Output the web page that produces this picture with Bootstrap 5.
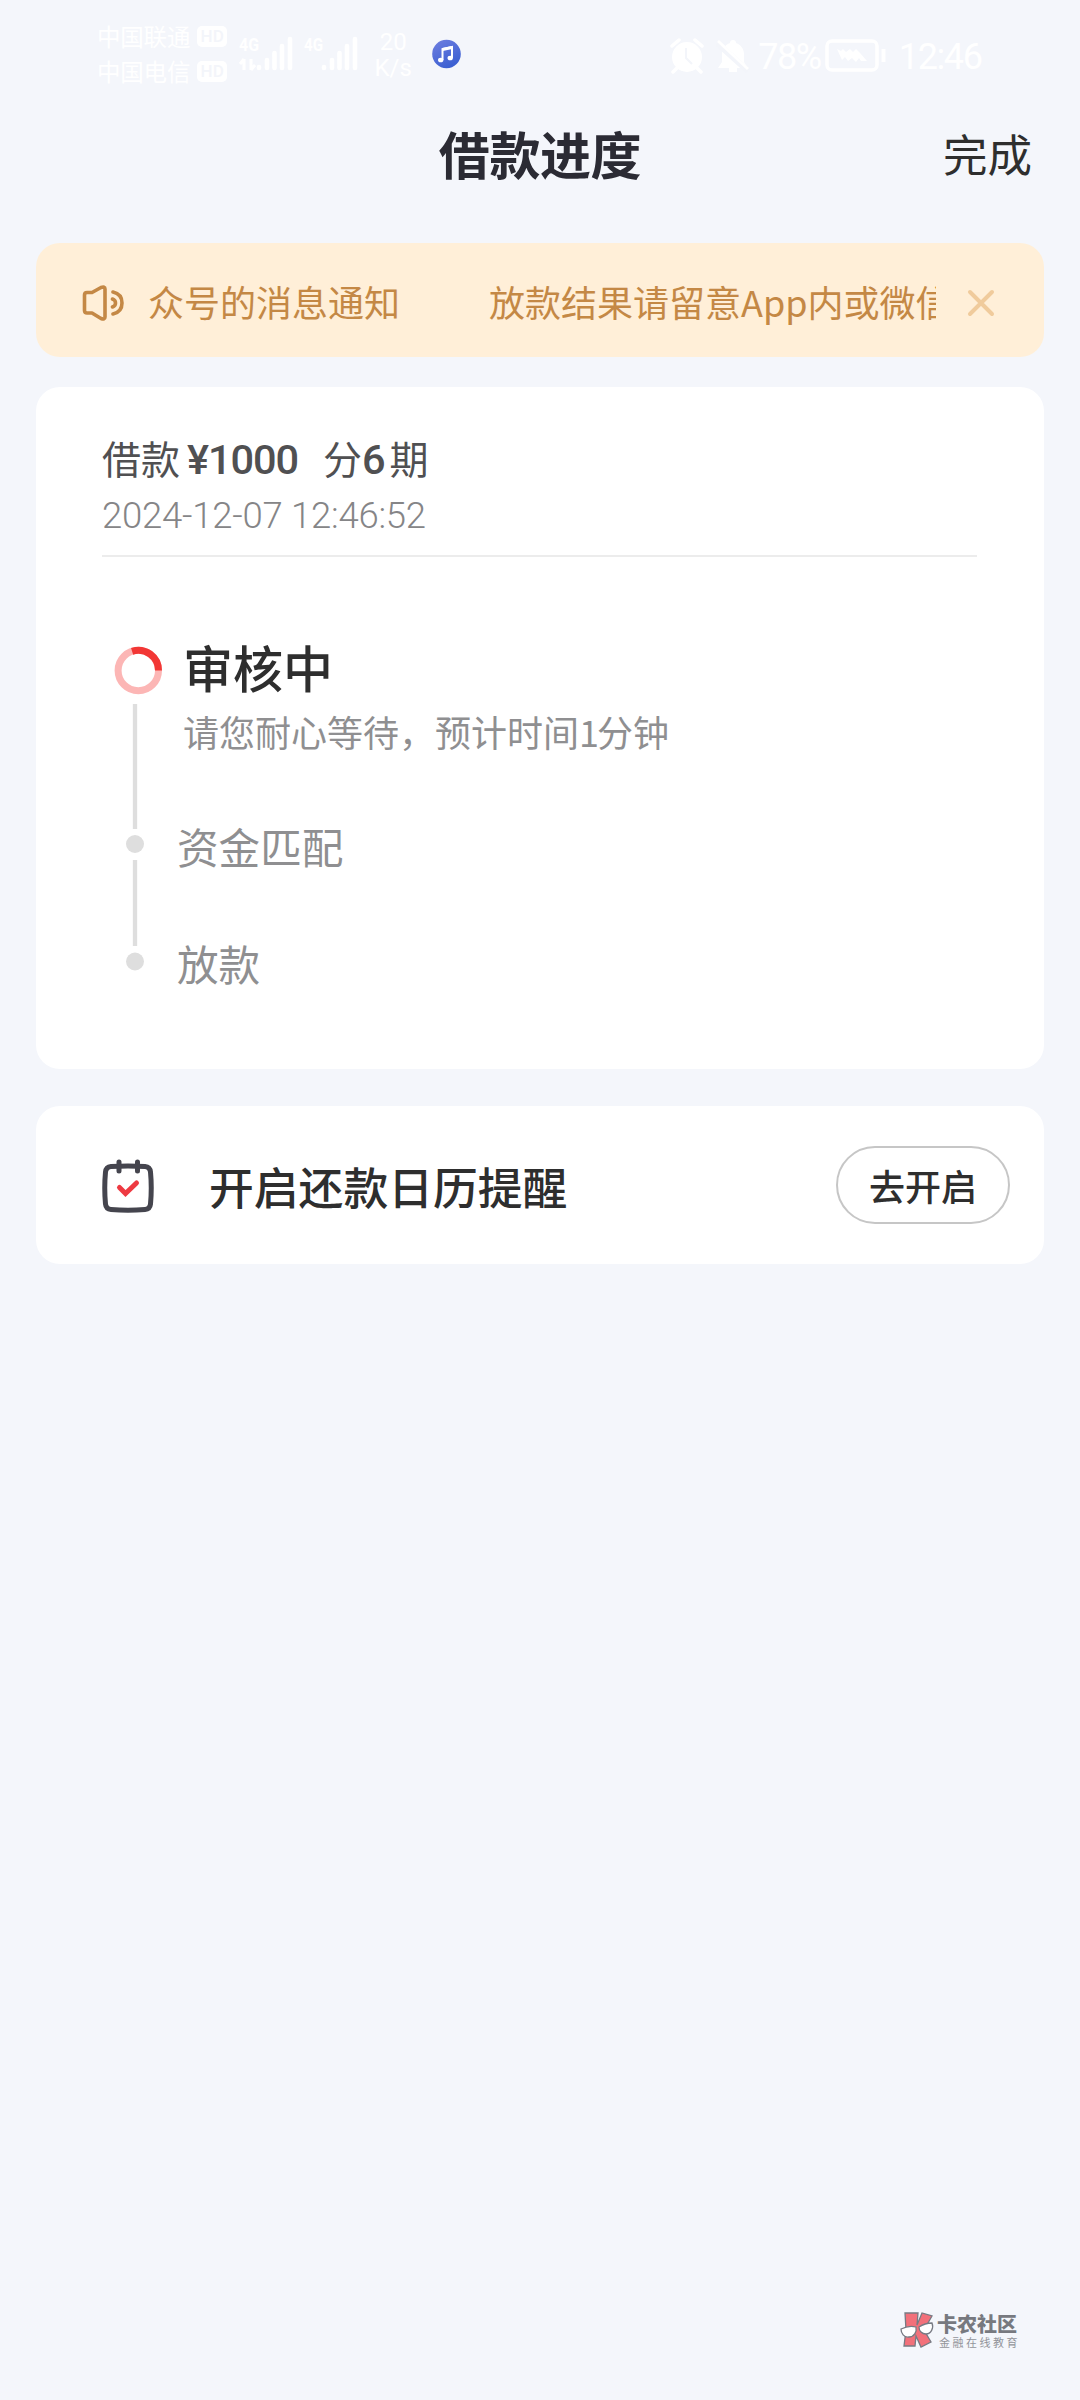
<!DOCTYPE html>
<html lang="zh-CN">
<head>
<meta charset="utf-8">
<meta name="viewport" content="width=device-width, initial-scale=1">
<title>借款进度</title>
<link href="https://cdn.jsdelivr.net/npm/bootstrap@5.3.0/dist/css/bootstrap.min.css" rel="stylesheet">
<style>
body{background:#f4f6fb;font-family:"Noto Sans CJK SC",sans-serif;color:#2e2e2e;width:1080px;min-height:2400px}
svg{display:block;flex:none}
.status-bar{height:110px;padding:19px 0 0 97px;color:#fff;line-height:1}
.carrier{font-size:23.5px;line-height:35px;height:35px;letter-spacing:-.2px}
.hd-tag{width:30px;height:21px;margin-left:7px;border-radius:5px;background:#fff;color:#f3f5fa;font:500 17px/21px Roboto,sans-serif;text-align:center;letter-spacing:0}
.signals{margin-left:8px}
.speed{width:44px;margin-top:10px;font:400 24px/26px Roboto,sans-serif;text-align:center}
.music{margin:19px 0 0 15px}
.system{margin:18px 0 0 208px}
.bell{margin-left:12px}
.battery{margin:0 12px 0 4px}
.clock{font-family:Roboto,sans-serif;font-size:36px;line-height:36px;padding-top:2px;letter-spacing:-1.4px}
.title-bar{height:133px}
.title-bar h1{font-size:51px;line-height:87px;color:#2b2b34;letter-spacing:-.4px}
.title-bar a{font-size:44.5px;line-height:85px;color:#2e2e2e;right:48px;top:0}
.panel{margin:0 36px;border-radius:24px;background:#fff}
.notice{height:114px;background:#ffefd8;color:#c48845;padding:0 49px 0 46px}
.notice svg{margin-top:5px}
.marquee{width:788px;margin-left:24px;font-size:36px;line-height:60px;padding-top:1px;white-space:nowrap;overflow:hidden}
.marquee .gap{display:inline-block;width:89px}
.loan{margin-top:30px;height:682px;padding:42px 67px 0 66px}
.amount{font-size:39px;line-height:56px;height:56px;color:#505052}
.din{font-family:Roboto,sans-serif;font-weight:500;font-size:41.5px;letter-spacing:-1.1px;padding-top:5px}
.stamp{font:300 36.5px/46px Roboto,sans-serif;letter-spacing:-.25px;color:#858587;margin-top:8px;border-bottom:2px solid #ececec;height:64px}
.rail{width:48px;margin-left:12px;margin-right:21px}
.steps{margin-top:87px}
.step-list{margin-top:-8px}
.step-now{font-size:50px;font-weight:500;line-height:60px;color:#2e2e2e}
.step-tip{font-size:36px;line-height:50px;color:#8f8f91;margin-top:10px}
.step-tip span{letter-spacing:-2px}
.step-next{font-size:41.6px;line-height:60px;color:#8f8f91;margin:60px 0 0 -6px}
.step-next + .step-next{margin-top:57px}
.remind{margin-top:37px;height:158px;padding:2px 34px 0 66px}
.remind-label{font-size:44.8px;font-weight:500;margin-left:55px;line-height:64px}
.btn-open{width:174px;height:78px;border:2px solid #c6c6c6;border-radius:39px;font-size:36px;font-weight:500;line-height:74px;padding:0;color:#2e2e2e;margin-top:-2px}
.brand{left:899px;top:2311px}
.brand-text{padding:2px 0 0 2px}
.brand-name{font-size:20px;line-height:22px;font-weight:900;color:#77797f}
.brand-sub{font-size:11px;line-height:14px;letter-spacing:2.5px;color:#92949a;padding-left:2px}
</style>
</head>
<body class="position-relative overflow-hidden">
<header class="status-bar d-flex align-items-start">
  <div>
    <div class="carrier d-flex align-items-center">中国联通<span class="hd-tag">HD</span></div>
    <div class="carrier d-flex align-items-center">中国电信<span class="hd-tag">HD</span></div>
  </div>
  <svg class="signals" width="136" height="60" viewBox="0 0 136 60" fill="#fff">
    <g font-family="Roboto,sans-serif" font-size="18" font-weight="700"><text x="4" y="32" textLength="20" lengthAdjust="spacingAndGlyphs">4G</text><text x="69" y="32" textLength="19" lengthAdjust="spacingAndGlyphs">4G</text></g>
    <path d="M9 40v11M9 40l-4 5M16 51V40M16 51l4-5" stroke="#fff" stroke-width="3"/>
    <g stroke="#fff" stroke-width="4.600" stroke-linecap="round"><path d="M24 48v1M32 41v8M39.500 34v15M47 27v22M55 20v29M89 48v1M97 41v8M104.500 34v15M112 27v22M120 20v29"/></g>
  </svg>
  <div class="speed">20<br>K/s</div>
  <svg class="music" width="32" height="32" viewBox="0 0 32 32">
    <defs><linearGradient id="mg" x1="0" y1="0" x2=".5" y2="1"><stop offset="0" stop-color="#707fe0"/><stop offset="1" stop-color="#3c60d2"/></linearGradient></defs>
    <circle cx="16.500" cy="16" r="14.300" fill="url(#mg)"/>
    <path d="M12.500 22V11l9.500-2v11" fill="none" stroke="#fff" stroke-width="2"/><path d="M12.500 11.500l9.500-2" stroke="#fff" stroke-width="3"/><ellipse cx="10.700" cy="22" rx="2.700" ry="2.300" fill="#fff"/><ellipse cx="20.200" cy="20" rx="2.700" ry="2.300" fill="#fff"/>
  </svg>
  <div class="system d-flex align-items-center">
    <svg width="34" height="36" viewBox="0 0 34 36"><circle cx="17" cy="19" r="15" fill="#fff"/><path d="M2 8l7-6M32 8l-7-6M7 30l-4 4M27 30l4 4" stroke="#fff" stroke-width="3.500" stroke-linecap="round"/><path d="M16 10v10l6 6" fill="none" stroke="#f3f5fa" stroke-width="2"/></svg>
    <svg class="bell" width="34" height="36" viewBox="0 0 34 36"><path d="M17 2c2 0 3 1 3 3 5 2 8 6 8 11v8l4 6H2l4-6v-8C6 11 9 7 14 5c0-2 1-3 3-3z" fill="#fff"/><path d="M13 32h8" stroke="#fff" stroke-width="4"/><path d="M1 5l31 28" stroke="#f3f5fa" stroke-width="6"/><path d="M2 3l30 28" stroke="#fff" stroke-width="3"/></svg>
    <span class="clock ms-2">78%</span>
    <svg class="battery" width="62" height="34" viewBox="0 0 62 34"><rect x="2" y="2" width="50" height="29" rx="5" fill="none" stroke="#fff" stroke-width="3.500"/><path d="M12 10l4 2 2-2 3 3 4-3 3 3 3-3 4 4 7 8h-6l-2-3-3 4-4-4-4 3-3-4-3 3z" fill="#fff"/><path d="M58.500 10v13" stroke="#fff" stroke-width="4"/></svg>
    <span class="clock">12:46</span>
  </div>
</header>
<nav class="title-bar position-relative">
  <h1 class="text-center fw-bold m-0">借款进度</h1>
  <a class="position-absolute text-decoration-none" href="#">完成</a>
</nav>
<section class="panel notice d-flex align-items-center">
  <svg width="42" height="36" viewBox="0 0 42 36" fill="none" stroke="#c48845" stroke-width="3.600" stroke-linecap="round" stroke-linejoin="round"><path d="M2.500 10q0-2.500 2.500-2.500h5L19 2.500q4-1.500 4 1.500v28q0 3-4 1.500L10 28H5q-2.500 0-2.500-2.500zM31 7q9 2 9 11t-9 11M30.500 14q3 1 3 4t-3 4"/></svg>
  <div class="marquee">众号的消息通知<span class="gap"></span>放款结果请留意App内或微信公众号的消息通知</div>
  <svg class="ms-auto" width="28" height="28" viewBox="0 0 28 28" stroke="#f0cb9c" stroke-width="4" stroke-linecap="round"><path d="M3 3l22 22M25 3L3 25"/></svg>
</section>
<section class="panel loan">
  <div class="amount d-flex align-items-center"><span>借款</span><span class="din" style="margin-left:7px">¥1000</span><span style="margin-left:25px">分</span><span class="din">6</span><span style="margin-left:5px">期</span></div>
  <div class="stamp">2024-12-07 12:46:52</div>
  <div class="steps d-flex">
    <svg class="rail" width="48" height="340" viewBox="0 0 48 340">
      <g fill="none" stroke-width="7"><circle cx="24.300" cy="26.500" r="20.200" stroke="#fcb6b5"/><path d="M18.100 7.300A20.200 20.200 0 0 1 44.500 26.500" stroke="#f23735"/></g>
      <path d="M21 60v125M21 216v86" stroke="#dedede" stroke-width="4.300"/><circle cx="21" cy="200" r="9" fill="#dedede"/><circle cx="21" cy="317.500" r="9" fill="#dedede"/>
    </svg>
    <div class="step-list">
      <div class="step-now">审核中</div>
      <div class="step-tip">请您耐心等待，预计时间<span>1</span>分钟</div>
      <div class="step-next">资金匹配</div>
      <div class="step-next">放款</div>
    </div>
  </div>
</section>
<section class="panel remind d-flex align-items-center">
  <svg width="52" height="56" viewBox="0 0 52 56" fill="none" stroke="#45454e" stroke-width="5" stroke-linecap="round" stroke-linejoin="round"><path d="M9 8.500q17-1 34 0 5 .5 5.500 5.500 1.500 16 0 32-.5 5-5.500 5.500-17 1.500-34 0-5-.5-5.500-5.500-1.500-16 0-32Q4 9 9 8.500z"/><path d="M17 4v9M35.500 4v9"/><path d="M17.500 29.500l6 6L34.500 25" stroke="#ee3a42" stroke-linejoin="miter"/></svg>
  <span class="remind-label">开启还款日历提醒</span>
  <button class="btn btn-open ms-auto">去开启</button>
</section>
<footer class="brand position-absolute d-flex">
  <svg width="36" height="38" viewBox="0 0 36 38"><path d="M6 2h13l-1 12 5-12 10 3-8 14 7 12-10 5-5-11-1 10H5l2-16z" fill="#f2707a" stroke="#777a83" stroke-width="1.300"/><path d="M2 18q8-4 15-2c1 5-2 10-7 10-5 1-8-4-8-8zM20 16q6-4 13-4c2 5-1 11-6 11-4 0-7-3-7-7z" fill="#fff" stroke="#777a83" stroke-width="1.300"/></svg>
  <div class="brand-text"><div class="brand-name">卡农社区</div><div class="brand-sub">金融在线教育</div></div>
</footer>
<script src="https://cdn.jsdelivr.net/npm/bootstrap@5.3.0/dist/js/bootstrap.bundle.min.js"></script>
</body>
</html>
